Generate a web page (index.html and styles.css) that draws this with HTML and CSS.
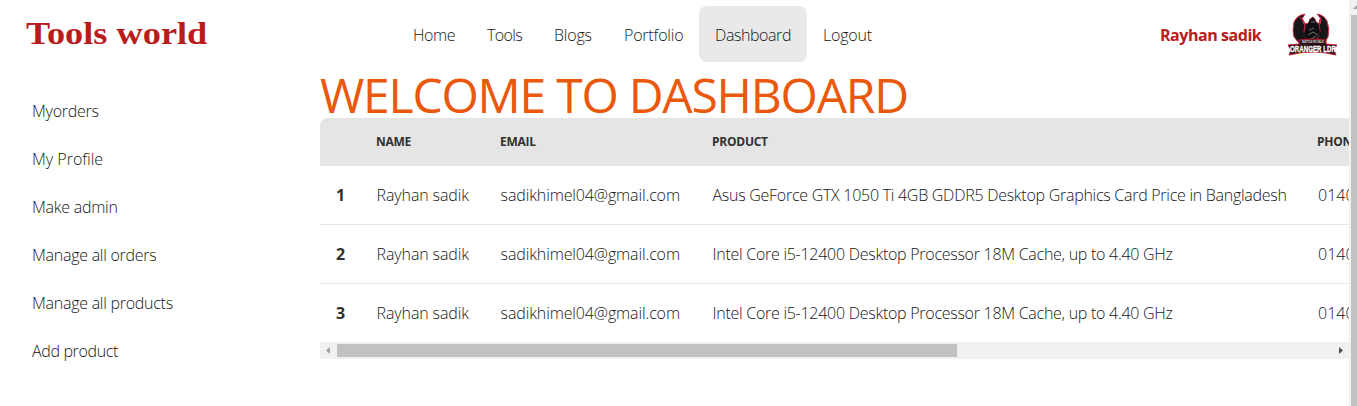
FILE: index.html
```
<!DOCTYPE html>
<html lang="en">
<head>
<meta charset="utf-8">
<title>Tools world</title>
<link rel="stylesheet" href="styles.css">
</head>
<body>
<div class="page">
  <header class="navbar">
    <div class="brand"><a>Tools world</a></div>
    <nav class="menu">
      <a class="home">Home</a><a class="tools">Tools</a><a class="blogs">Blogs</a><a class="portfolio">Portfolio</a><a class="dashboard active">Dashboard</a><a class="logout">Logout</a>
    </nav>
    <div class="user">
      <span class="username">Rayhan sadik</span>
      <svg class="avatar" viewBox="0 0 52 46" width="52" height="46">
        <path d="M18 3Q10 4 7 11Q5 20 7 26L11 31H38L41 26Q43 18 40 10Q37 4 30 3L34 8 33 13 29 11 28 8 26 6 23 8 22 12 17 13 15 8Z" fill="#17171a" stroke="#e0304a" stroke-width="1"/>
        <path d="M13 6Q20 11 17 20L20 28M34 6Q31 12 33 20L30 28" fill="none" stroke="#c0243a" stroke-width="1.2"/>
        <path d="M22 10 26 6 29 11 32 16 33 22 29 29H20L17 22 20 16Z" fill="#101013"/>
        <path d="M24 11H28M22 19 27 17M21 24 26 21 31 24M24 28 29 25" stroke="#88858b" fill="none" stroke-width=".8"/>
        <path d="M12 29Q26 27 39 29L39 33 50 34 47 38 49 44Q26 38 2 44L4 39 1 34 12 33Z" fill="#2a1015" stroke="#c5203a"/>
        <text x="26" y="32" class="avatar-small" textLength="22">BATTLE ROYALE</text>
        <text x="26" y="40.5" class="avatar-name" textLength="46" lengthAdjust="spacingAndGlyphs">ORANGER LDR</text>
      </svg>
    </div>
  </header>
  <div class="body">
    <aside class="sidebar">
      <a>Myorders</a><a class="profile">My Profile</a><a>Make admin</a><a>Manage all orders</a><a>Manage all products</a><a class="add">Add product</a>
    </aside>
    <main class="content">
      <h1>WELCOME TO DASHBOARD</h1>
      <div class="table">
        <div class="row head"><span></span><span>NAME</span><span>EMAIL</span><span>PRODUCT</span><span>PHONE</span></div>
        <div class="row"><b>1</b><span class="name">Rayhan sadik</span><span class="email">sadikhimel04@gmail.com</span><span class="product">Asus GeForce GTX 1050 Ti 4GB GDDR5 Desktop Graphics Card Price in Bangladesh</span><span class="phone">01400</span></div>
        <div class="row"><b>2</b><span class="name">Rayhan sadik</span><span class="email">sadikhimel04@gmail.com</span><span class="product">Intel Core i5-12400 Desktop Processor 18M Cache, up to 4.40 GHz</span><span class="phone">01400</span></div>
        <div class="row last"><b>3</b><span class="name">Rayhan sadik</span><span class="email">sadikhimel04@gmail.com</span><span class="product">Intel Core i5-12400 Desktop Processor 18M Cache, up to 4.40 GHz</span><span class="phone">01400</span></div>
      </div>
      <div class="hscroll">
        <svg width="17" height="17"><path d="M10 5V12L6 8.5Z" fill="#a3a3a3"/></svg>
        <div class="hthumb"></div>
        <svg class="right" width="17" height="17"><path d="M7 5V12L11 8.5Z" fill="#505050"/></svg>
      </div>
    </main>
  </div>
</div>
<div class="vscroll">
  <svg width="8" height="15"><path d="M4 9 8 5V9Z" fill="#a3a3a3"/></svg>
  <div class="vthumb"></div>
</div>
</body>
</html>
```
FILE: styles.css
```
* { box-sizing: border-box; }
body {
  margin: 0;
  display: flex;
  width: 1357px;
  height: 406px;
  overflow: hidden;
  background: #fff;
  color: #161616;
  font: 300 16px/24px "Open Sans", sans-serif;
}
.page { width: 1349px; height: 406px; overflow: hidden; }
.navbar { display: flex; height: 68px; align-items: center; }
.brand { width: 397px; padding: 0 0 2px 26px; }
.brand a {
  display: inline-block;
  color: #b91c1c;
  font: 700 32px/40px "Liberation Serif", serif;
  white-space: nowrap;
  transform: scaleX(1.135);
  transform-origin: left;
}
.menu { display: flex; width: 763px; }
.menu a { height: 56px; padding: 17px 0 0 16px; border-radius: 8px; letter-spacing: -.2px; white-space: nowrap; }
.menu .home { width: 74px; letter-spacing: -.4px; }
.menu .tools { width: 67px; letter-spacing: -.6px; }
.menu .blogs { width: 70px; }
.menu .portfolio { width: 91px; }
.menu .dashboard { width: 108px; letter-spacing: -.42px; }
.menu .active { background: #e9e9e9; }
.user { display: flex; align-items: center; }
.username { width: 127px; padding-top: 1px; color: #b91c1c; font-weight: 700; letter-spacing: -.45px; white-space: nowrap; }
.avatar-small, .avatar-name { font-family: "Liberation Sans", sans-serif; font-weight: 700; fill: #fff; text-anchor: middle; }
.avatar-small { font-size: 3px; fill: #ccc; }
.avatar-name { font-size: 9px; stroke: #fff; stroke-width: .3px; }
.body { display: flex; }
.sidebar { display: flex; flex-direction: column; width: 320px; padding: 19px 0 0 32px; }
.sidebar a { height: 48px; padding-top: 12px; letter-spacing: -.26px; white-space: nowrap; }
.sidebar .profile { letter-spacing: 0; }
.sidebar .add { letter-spacing: -.35px; }
.content { width: 1029px; overflow: hidden; padding-top: 2px; }
h1 { height: 48px; margin: 0; color: #ea580c; font-size: 48px; font-weight: 400; letter-spacing: -1.22px; line-height: 50px; white-space: nowrap; }
.table { border-top-left-radius: 8px; overflow: hidden; }
.row {
  display: grid;
  grid-template-columns: 40px 124px 212px 605px 120px;
  align-items: center;
  height: 59px;
  padding-left: 16px;
  border-bottom: 1px solid #e5e5e5;
  white-space: nowrap;
}
.row b { color: #303030; font-weight: 700; }
.name, .email { padding-left: .6px; letter-spacing: -.12px; }
.product { padding-left: .5px; letter-spacing: -.27px; }
.phone { padding-left: 1px; }
.row.head { height: 48px; background: #e5e5e5; color: #303030; font-size: 12px; font-weight: 700; letter-spacing: -.25px; line-height: 16px; }
.row.last { height: 58px; border-bottom: 0; }
.hscroll { display: flex; align-items: center; height: 17px; background: #f1f1f1; }
.hthumb { width: 620px; height: 13px; background: #c1c1c1; }
.hscroll .right { margin-left: auto; }
.vscroll { display: flex; flex-direction: column; width: 8px; height: 406px; background: #f1f1f1; }
.vthumb { width: 6px; height: 391px; margin-left: 2px; background: #c1c1c1; }
```
